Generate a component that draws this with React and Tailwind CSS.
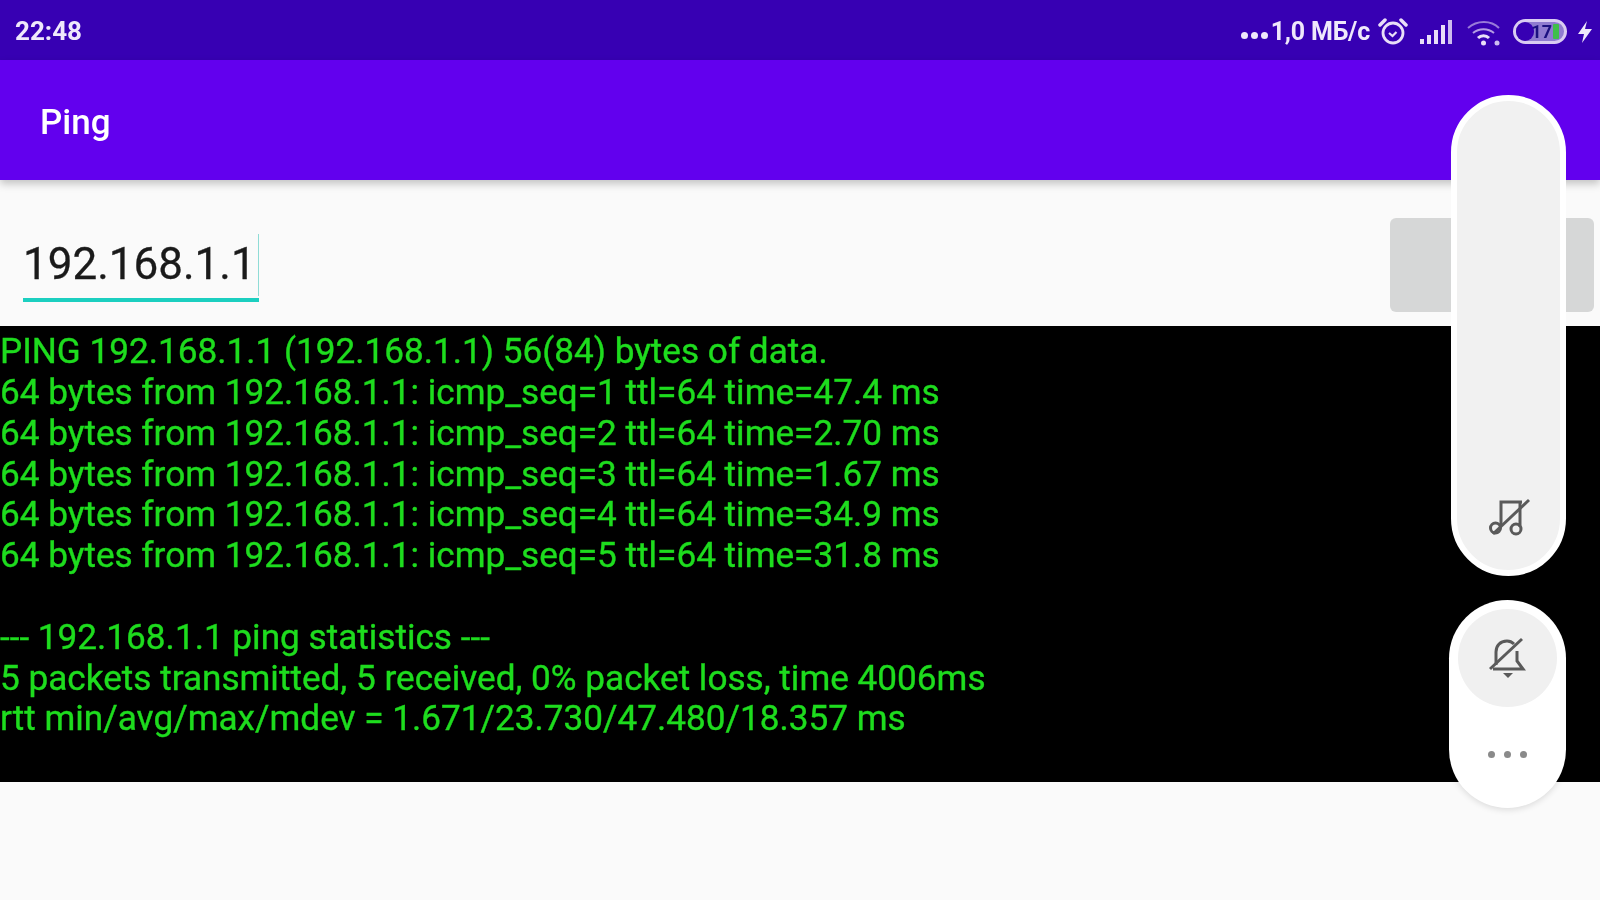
const LINES = [
  "PING 192.168.1.1 (192.168.1.1) 56(84) bytes of data.",
  "64 bytes from 192.168.1.1: icmp_seq=1 ttl=64 time=47.4 ms",
  "64 bytes from 192.168.1.1: icmp_seq=2 ttl=64 time=2.70 ms",
  "64 bytes from 192.168.1.1: icmp_seq=3 ttl=64 time=1.67 ms",
  "64 bytes from 192.168.1.1: icmp_seq=4 ttl=64 time=34.9 ms",
  "64 bytes from 192.168.1.1: icmp_seq=5 ttl=64 time=31.8 ms",
  "",
  "--- 192.168.1.1 ping statistics ---",
  "5 packets transmitted, 5 received, 0% packet loss, time 4006ms",
  "rtt min/avg/max/mdev = 1.671/23.730/47.480/18.357 ms",
];

function Alarm() {
  return (
    <svg width="30" height="30" viewBox="0 0 30 30" fill="none" stroke="#e9def8" strokeWidth="2.800">
      <circle cx="15" cy="16" r="10" />
      <path d="M11 16l3.500 3 4-4" strokeWidth="2.200" />
      <path d="M2 8l5-5M28 8l-5-5" strokeLinecap="round" strokeWidth="3.500" />
    </svg>
  );
}

function Signal() {
  return (
    <svg width="35" height="26" viewBox="0 0 35 26" fill="#e9def8">
      <rect x="1" y="20" width="4" height="5" />
      <rect x="8" y="16" width="4" height="9" />
      <rect x="15" y="11" width="4" height="14" />
      <rect x="22" y="6" width="4" height="19" />
      <rect x="29" y="1" width="4" height="24" opacity="0.85" />
    </svg>
  );
}

function Wifi() {
  return (
    <svg width="36" height="28" viewBox="0 0 36 28" fill="none" stroke="#e9def8">
      <path d="M2 10c9-8 23-8 31 0" strokeWidth="2" opacity="0.55" />
      <path d="M7 15c6-5 15-5 21 0" strokeWidth="2" opacity="0.7" />
      <path d="M12 20c3-3 8-3 11 0" strokeWidth="3" />
      <circle cx="17.500" cy="25" r="2.500" fill="#e9def8" stroke="none" />
      <circle cx="31" cy="25" r="2.500" fill="#cdbcf0" stroke="none" />
    </svg>
  );
}

function Battery() {
  return (
    <div className="relative flex h-[25px] w-[54px] items-center justify-end rounded-full border-[3px] border-[#d9ccf2] bg-[#8f7bd0] pr-[5px]">
      <span className="absolute top-0 bottom-0 left-0 w-[18px] rounded-full bg-[#3700b3]" />
      <span className="relative text-[18px] leading-none font-bold text-[#1b1080]">17</span>
      <span className="relative ml-[1px] h-[15px] w-[6px] rounded-[1px] bg-[#3fbf4a]" />
    </div>
  );
}

function Bolt() {
  return (
    <svg width="16" height="24" viewBox="0 0 16 24" fill="#efe8fb">
      <path d="M10 1L1 14h6l-2 9 10-14H8z" />
    </svg>
  );
}

function MusicOff() {
  return (
    <svg width="44" height="40" viewBox="0 0 44 40" fill="none" stroke="#5a5a5a" strokeWidth="3">
      <path d="M14 28V4h21" />
      <path d="M33 4v25" />
      <circle cx="8.500" cy="30" r="5" />
      <circle cx="29" cy="31" r="5" />
      <path d="M6 36L42 2" />
    </svg>
  );
}

function BellOff() {
  return (
    <svg width="40" height="42" viewBox="0 0 40 42" fill="none" stroke="#5a5a5a" strokeWidth="3">
      <path d="M8 28V15c0-6 4-11 11-11 3 0 5 1 7 3" />
      <path d="M29 14v10l6 8H5" />
      <path d="M15 36h10l-5 5z" fill="#5a5a5a" stroke="none" />
      <path d="M2 32L34 2" />
    </svg>
  );
}

export default function App() {
  return (
    <div className="relative flex h-[900px] w-[1600px] flex-col overflow-hidden bg-[#fafafa] font-['Roboto',sans-serif] blur-[0.6px]">
      <div className="flex h-[60px] items-center justify-between bg-[#3700b3] pt-[3px] pr-[7px] pl-[15px]">
        <span className="text-[26px] font-bold text-[#efe8fb]">22:48</span>
        <div className="flex items-center">
          <span className="mt-[8px] flex gap-[3px]">
            <span className="h-[7px] w-[7px] rounded-full bg-[#efe8fb]" />
            <span className="h-[7px] w-[7px] rounded-full bg-[#efe8fb]" />
            <span className="h-[7px] w-[7px] rounded-full bg-[#efe8fb]" />
          </span>
          <span className="ml-[3px] text-[25px] font-bold tracking-[-0.2px] text-[#efe8fb]">1,0 МБ/с</span>
          <span className="ml-[8px] flex"><Alarm /></span>
          <span className="ml-[11px] flex"><Signal /></span>
          <span className="ml-[12px] flex"><Wifi /></span>
          <span className="ml-[11px] flex"><Battery /></span>
          <span className="ml-[10px] flex"><Bolt /></span>
        </div>
      </div>

      <div className="flex h-[120px] items-center bg-[#6200ee] pt-[6px] pl-[40px] shadow-[0_4px_8px_rgba(0,0,0,0.22)]">
        <span className="text-[35px] font-medium text-white">Ping</span>
      </div>

      <div className="flex h-[146px] items-start justify-between pt-[38px] pr-[6px] pl-[23px]">
        <div className="relative mt-[16px] w-[236px] border-b-[4px] border-[#1ccfc0] pb-[4px]">
          <span className="block text-[44px] leading-[60px] text-[#1a1a1a] [-webkit-text-stroke:0.3px_#1a1a1a]">192.168.1.1</span>
          <span className="absolute top-0 right-0 bottom-[2px] w-[1px] bg-[#8fdcd6]" />
        </div>
        <div className="h-[94px] w-[204px] rounded-[6px] bg-[#d6d7d7]" />
      </div>

      <div className="h-[456px] bg-black pt-[5.200px] text-[35.150px] leading-[40.800px] whitespace-pre text-[#1edc1e] [-webkit-text-stroke:0.4px_#1edc1e]">
        {LINES.map((line, i) => (
          <div key={i} className="h-[40.800px]">{line}</div>
        ))}
      </div>

      <div className="absolute top-[95px] left-[1451px] z-20 flex h-[481px] w-[115px] items-end justify-center rounded-full border-[6px] border-white bg-[#f1f1f1] pb-[32px]">
        <MusicOff />
      </div>

      <div className="absolute top-[600px] left-[1449px] z-20 flex h-[208px] w-[117px] flex-col items-center rounded-full bg-white px-[9px] pt-[9px] shadow-[0_2px_6px_rgba(0,0,0,0.12)]">
        <div className="flex h-[98px] w-full items-center justify-center rounded-full bg-[#f0f0f0]">
          <BellOff />
        </div>
        <div className="mt-[44px] flex gap-[9px]">
          <span className="h-[7px] w-[7px] rounded-full bg-[#8a8a8a]" />
          <span className="h-[7px] w-[7px] rounded-full bg-[#8a8a8a]" />
          <span className="h-[7px] w-[7px] rounded-full bg-[#8a8a8a]" />
        </div>
      </div>
    </div>
  );
}
